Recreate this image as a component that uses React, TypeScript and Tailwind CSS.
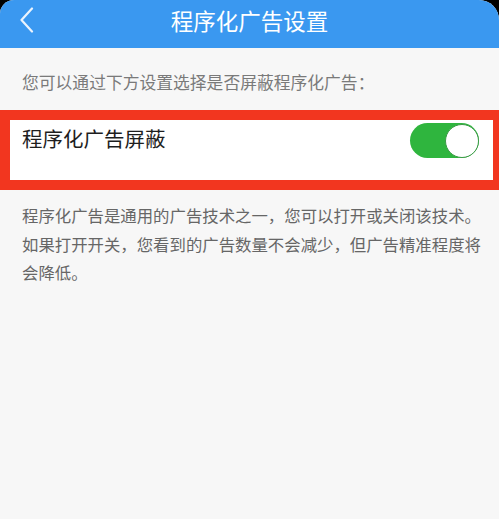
import React from "react";

export default function App() {
  const font = { fontFamily: '"Noto Sans CJK SC", "Noto Sans", sans-serif' };
  return (
    <div className="w-[499px] h-[519px] bg-black overflow-hidden" style={font}>
      <div className="w-full h-full bg-[#f7f7f7] rounded-tl-[14px] rounded-tr-[20px] overflow-hidden flex flex-col">
        <div className="h-[48px] bg-[#3a98f0] relative flex items-center justify-center shrink-0">
          <svg
            className="absolute left-[19px] top-[7px]"
            width="16"
            height="26"
            viewBox="0 0 16 26"
            fill="none"
          >
            <path d="M13 1.5 L2.5 13 L13 24.5" stroke="#eaf3fd" strokeWidth="2.2" strokeLinecap="round" strokeLinejoin="round" />
          </svg>
          <span className="text-white text-[22.5px] leading-none -mt-[7px]">程序化广告设置</span>
        </div>
        <div className="pl-[22px] pt-[24px] h-[62px] text-[16.8px] leading-[20px] text-[#7a7a7a]">
          您可以通过下方设置选择是否屏蔽程序化广告：
        </div>
        <div className="border-l-[10px] border-r-[6px] border-y-[10px] border-[#f2361f] h-[80px]">
          <div className="bg-white h-full flex items-start justify-between pl-[12px] pr-[14px] pt-[3px]">
            <span className="text-[20.5px] text-[#1e1e1e] leading-[35px] -mt-[2px]">程序化广告屏蔽</span>
            <div className="w-[69px] h-[35px] rounded-full bg-[#2fb53e] relative">
              <div className="absolute right-0 top-[0.5px] w-[34px] h-[34px] rounded-full bg-white border border-[#3a9a45]" />
            </div>
          </div>
        </div>
        <div className="pl-[22px] pr-[10px] pt-[11px] text-[16.4px] leading-[28.5px] text-[#666666]">
          程序化广告是通用的广告技术之一，您可以打开或关闭该技术。
          <br />
          如果打开开关，您看到的广告数量不会减少，但广告精准程度将
          <br />
          会降低。
        </div>
      </div>
    </div>
  );
}
